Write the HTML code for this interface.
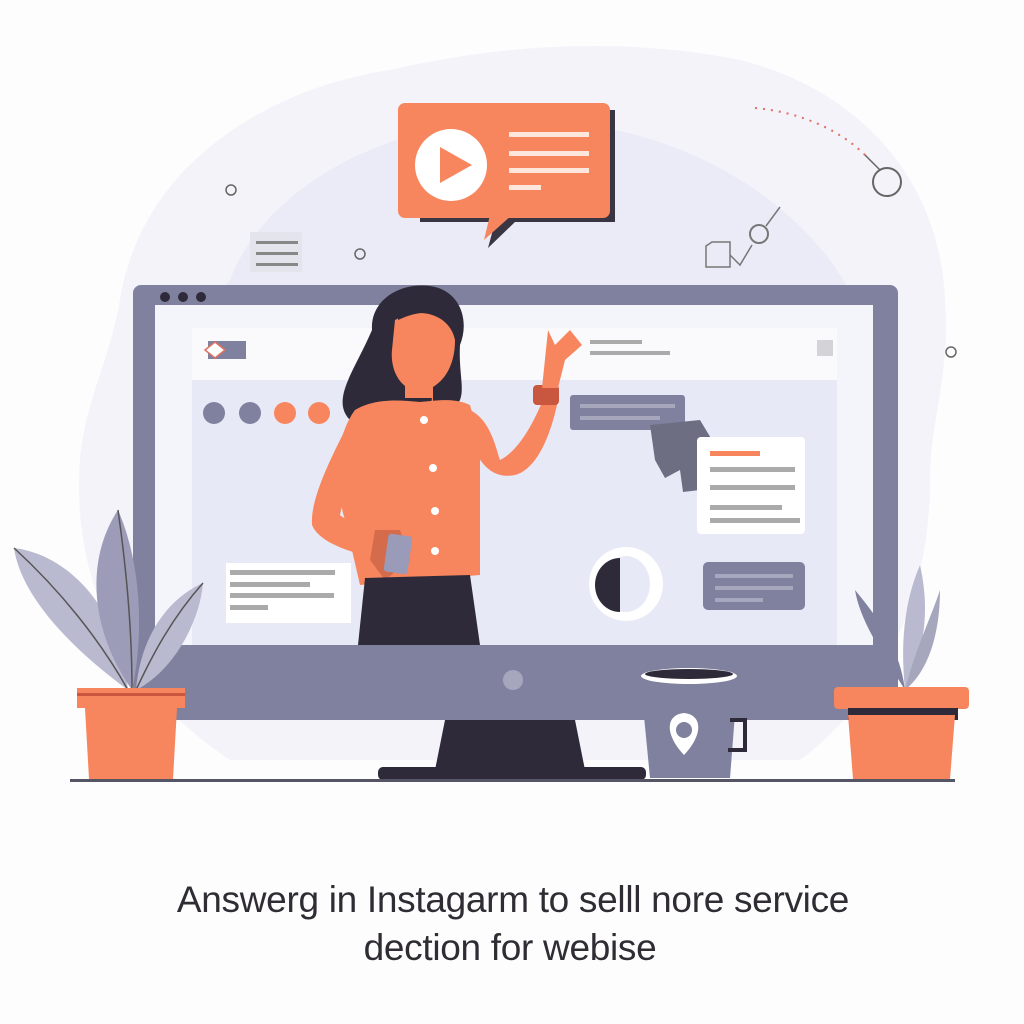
<!DOCTYPE html>
<html><head><style>
html,body{margin:0;padding:0;background:#fdfdfe;}
svg{display:block}
.t{font-family:"Liberation Sans",sans-serif;fill:#2f2d33;font-size:37px;text-anchor:middle;letter-spacing:-0.3px}
</style></head><body>
<svg width="1024" height="1024" viewBox="0 0 1024 1024" xmlns="http://www.w3.org/2000/svg">
<rect width="1024" height="1024" fill="#fdfdfe"/>
<path d="M120 300 C140 170 260 90 390 70 C520 40 640 40 740 60 C860 90 940 180 945 300 C950 380 930 420 930 480 C930 600 880 700 800 760 L230 760 C140 700 70 600 80 460 C85 400 110 360 120 300Z" fill="#f3f3f9"/>
<path d="M230 280 C260 200 360 130 500 120 C640 115 760 170 830 260 C880 330 900 420 890 520 L880 700 L160 700 L150 450 C160 380 200 320 230 280Z" fill="#eaebf7"/>
<circle cx="231" cy="190" r="5" fill="none" stroke="#666" stroke-width="1.5"/>
<circle cx="360" cy="254" r="5" fill="none" stroke="#666" stroke-width="1.5"/>
<circle cx="951" cy="352" r="5" fill="none" stroke="#666" stroke-width="1.5"/>
<rect x="250" y="232" width="52" height="40" fill="#e4e4ec"/>
<rect x="256" y="241" width="42" height="3" fill="#888"/>
<rect x="256" y="252" width="42" height="3" fill="#888"/>
<rect x="256" y="263" width="42" height="3" fill="#888"/>
<path d="M755 108 C800 112 840 130 865 155" fill="none" stroke="#e07060" stroke-width="2" stroke-dasharray="2 6"/>
<path d="M865 155 L880 170" stroke="#666" stroke-width="1.5"/>
<circle cx="887" cy="182" r="14" fill="none" stroke="#666" stroke-width="2"/>
<path d="M706 246 L712 242 L730 242 L730 267 L706 267Z" fill="none" stroke="#777" stroke-width="1.5"/>
<path d="M730 255 L740 265 L752 245" fill="none" stroke="#777" stroke-width="1.5"/>
<circle cx="759" cy="234" r="9" fill="none" stroke="#777" stroke-width="2"/>
<path d="M766 226 L780 207" stroke="#777" stroke-width="1.5"/>
<path d="M420 110 H615 V222 H515 L488 248 L495 222 H420Z" fill="#3a3542"/>
<rect x="398" y="103" width="212" height="115" rx="7" fill="#f7865e"/>
<path d="M490 215 L484 240 L512 215Z" fill="#f7865e"/>
<circle cx="451" cy="165" r="36" fill="#fff"/>
<path d="M440 147 L472 165 L440 183Z" fill="#f7865e"/>
<rect x="509" y="132" width="80" height="5" fill="#fde6dc"/>
<rect x="509" y="151" width="80" height="5" fill="#fde6dc"/>
<rect x="509" y="168" width="80" height="5" fill="#fde6dc"/>
<rect x="509" y="185" width="32" height="5" fill="#fde6dc"/>
<rect x="133" y="285" width="765" height="435" rx="8" fill="#80819f"/>
<rect x="155" y="305" width="718" height="340" fill="#f4f4fb"/>
<rect x="192" y="365" width="645" height="280" fill="#e8e9f7"/>
<rect x="192" y="328" width="645" height="52" fill="#fafafd"/>
<circle cx="165" cy="297" r="5" fill="#2e2a3a"/><circle cx="183" cy="297" r="5" fill="#2e2a3a"/><circle cx="201" cy="297" r="5" fill="#2e2a3a"/>
<rect x="208" y="341" width="38" height="18" fill="#80819f"/>
<path d="M205 350 L215 342 L225 350 L215 358Z" fill="#fff" stroke="#e07060" stroke-width="1.5"/>
<rect x="590" y="340" width="52" height="4" fill="#aaa"/>
<rect x="590" y="351" width="80" height="4" fill="#aaa"/>
<rect x="817" y="340" width="16" height="16" fill="#d4d4d8"/>
<circle cx="214" cy="413" r="11" fill="#80819f"/><circle cx="250" cy="413" r="11" fill="#80819f"/>
<circle cx="285" cy="413" r="11" fill="#f7865e"/><circle cx="319" cy="413" r="11" fill="#f7865e"/>
<rect x="570" y="395" width="115" height="35" rx="3" fill="#80819f"/>
<rect x="580" y="404" width="95" height="4" fill="#a6a7bd"/><rect x="580" y="416" width="80" height="4" fill="#a6a7bd"/>
<path d="M650 425 L700 420 L712 440 L700 490 L683 492 L680 470 L665 478 L655 460Z" fill="#6e6e82"/>
<rect x="697" y="437" width="108" height="97" rx="4" fill="#fff"/>
<rect x="710" y="451" width="50" height="5" fill="#f7865e"/>
<rect x="710" y="467" width="85" height="5" fill="#aaa"/>
<rect x="710" y="485" width="85" height="5" fill="#aaa"/>
<rect x="710" y="505" width="72" height="5" fill="#aaa"/>
<rect x="710" y="518" width="90" height="5" fill="#aaa"/>
<rect x="226" y="563" width="125" height="60" fill="#fff"/>
<rect x="230" y="570" width="105" height="5" fill="#aaa"/><rect x="230" y="582" width="80" height="5" fill="#aaa"/>
<rect x="230" y="593" width="104" height="5" fill="#aaa"/><rect x="230" y="605" width="38" height="5" fill="#aaa"/>
<circle cx="626" cy="584" r="37" fill="#fff"/>
<ellipse cx="626" cy="584" rx="24" ry="28" fill="#e8e9f7"/>
<path d="M620 558 A25 27 0 0 0 620 612Z" fill="#2e2a3a"/>
<rect x="703" y="562" width="102" height="48" rx="5" fill="#80819f"/>
<rect x="715" y="574" width="78" height="4" fill="#a6a7bd"/><rect x="715" y="586" width="78" height="4" fill="#a6a7bd"/><rect x="715" y="598" width="48" height="4" fill="#a6a7bd"/>
<path d="M372 330 C370 300 400 282 430 286 C460 290 470 320 460 345 C458 380 470 400 450 410 L350 420 C330 400 355 370 372 330Z" fill="#2e2a3a"/>
<path d="M395 320 C420 305 450 315 455 340 C455 370 440 388 420 392 C400 390 390 370 392 350Z" fill="#f7865e"/>
<path d="M398 300 C420 290 455 300 462 330 L450 325 C430 305 410 315 398 320Z" fill="#2e2a3a"/>
<rect x="405" y="385" width="28" height="22" fill="#f7865e"/>
<path d="M405 398 L432 398 L430 410 L405 410Z" fill="#2e2a3a"/>
<path d="M355 410 C375 398 400 400 420 402 C440 400 455 398 470 405 L480 440 L480 575 L360 585 L345 520 C330 470 340 430 355 410Z" fill="#f7865e"/>
<path d="M470 410 C490 420 495 445 500 460 C520 450 535 420 545 395 L558 400 C550 440 535 470 515 475 C490 480 478 460 470 440Z" fill="#f7865e"/>
<rect x="533" y="385" width="26" height="20" rx="4" fill="#c9573f"/>
<path d="M542 388 L548 330 L555 345 L570 330 L582 345 L565 360 L558 388Z" fill="#f7865e"/>
<path d="M345 430 C330 460 310 500 312 525 C320 545 360 555 385 560 L395 540 C370 530 345 520 340 515 C345 490 355 470 360 450Z" fill="#f7865e"/>
<path d="M375 530 L400 530 L410 560 L385 580 L370 560Z" fill="#d46c4c"/>
<rect x="386" y="535" width="24" height="38" rx="3" fill="#9a9bb8" transform="rotate(8 398 554)"/>
<circle cx="424" cy="420" r="4" fill="#fff"/><circle cx="433" cy="468" r="4" fill="#fff"/><circle cx="435" cy="511" r="4" fill="#fff"/><circle cx="435" cy="551" r="4" fill="#fff"/>
<path d="M365 578 L470 575 L480 645 L358 645Z" fill="#2e2a3a"/>
<circle cx="513" cy="680" r="10" fill="#a6a7bd"/>
<path d="M445 720 H575 L585 770 H435Z" fill="#2e2a3a"/>
<rect x="378" y="767" width="268" height="13" rx="5" fill="#2e2a3a"/>
<path d="M640 675 H738 L730 778 H650Z" fill="#80819f"/>
<ellipse cx="689" cy="676" rx="48" ry="8" fill="#fff"/>
<ellipse cx="689" cy="674" rx="44" ry="5" fill="#2e2a3a"/>
<path d="M730 720 H745 V750 H728" fill="none" stroke="#2e2a3a" stroke-width="4"/>
<path d="M684 755 C665 735 665 715 684 713 C703 715 703 735 684 755Z" fill="#fff"/>
<circle cx="684" cy="730" r="8" fill="#80819f"/>
<rect x="70" y="779" width="885" height="3" fill="#555566"/>
<path d="M128 690 C60 640 20 590 14 548 C70 555 120 610 128 690Z" fill="#b9b9cf"/>
<path d="M14 548 C60 590 100 640 128 690" fill="none" stroke="#555" stroke-width="1.5"/>
<path d="M132 690 C90 630 85 560 118 510 C140 560 145 630 132 690Z" fill="#9c9cb8"/>
<path d="M118 510 C128 580 132 640 132 690" fill="none" stroke="#555" stroke-width="1.5"/>
<path d="M136 690 C140 640 165 600 203 583 C200 620 175 670 136 690Z" fill="#b9b9cf"/>
<path d="M203 583 C170 620 150 660 136 690" fill="none" stroke="#555" stroke-width="1.5"/>
<rect x="77" y="688" width="108" height="20" fill="#f7865e"/>
<rect x="77" y="693" width="108" height="3" fill="#c9573f"/>
<path d="M85 708 H177 L173 779 H89Z" fill="#f7865e"/>
<path d="M905 690 C880 650 860 620 855 590 C880 620 900 650 905 690Z" fill="#80819f"/>
<path d="M905 690 C900 640 905 600 920 565 C930 610 925 650 905 690Z" fill="#b9b9cf"/>
<path d="M905 690 C915 650 930 620 940 590 C940 630 930 670 905 690Z" fill="#a6a7bd"/>
<rect x="834" y="687" width="135" height="22" rx="4" fill="#f7865e"/>
<rect x="848" y="708" width="110" height="12" fill="#2e2a3a"/>
<path d="M848 715 H955 L950 779 H853Z" fill="#f7865e"/>
<text class="t" x="513" y="912">Answerg in Instagarm to selll nore service</text>
<text class="t" x="510" y="960">dection for webise</text>
</svg>
</body></html>
